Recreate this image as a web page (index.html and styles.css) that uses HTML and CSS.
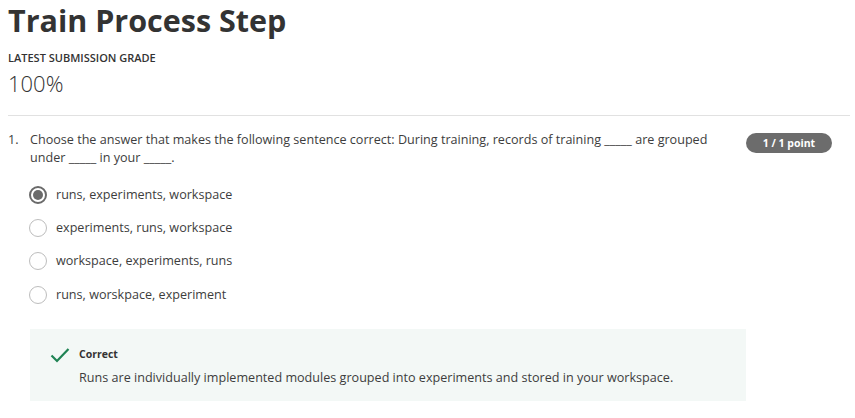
FILE: index.html
```html
<!DOCTYPE html>
<html>
<head>
<meta charset="utf-8">
<link rel="stylesheet" href="styles.css">
</head>
<body>
<div class="page">
  <h1 class="title">Train Process Step</h1>
  <div class="grade-label">LATEST SUBMISSION GRADE</div>
  <div class="grade">100%</div>
  <hr class="rule">
  <div class="question">
    <div class="q-num">1.</div>
    <div class="q-body">
      <div class="q-head">
        <div class="q-text">Choose the answer that makes the following sentence correct: During training, records of training _____ are grouped under _____ in your _____.</div>
        <div class="badge">1 / 1 point</div>
      </div>
    </div>
  </div>
  <div class="options">
    <div class="option"><span class="radio checked"></span><span>runs, experiments, workspace</span></div>
    <div class="option"><span class="radio"></span><span>experiments, runs, workspace</span></div>
    <div class="option"><span class="radio"></span><span>workspace, experiments, runs</span></div>
    <div class="option"><span class="radio"></span><span>runs, worskpace, experiment</span></div>
  </div>
  <div class="feedback">
    <svg class="check" width="20" height="16" viewBox="0 0 20 16"><path d="M1.5 8.5 L7 14 L18.5 2" fill="none" stroke="#1f8354" stroke-width="2.2"/></svg>
    <div class="fb-text">
      <div class="fb-title">Correct</div>
      <div class="fb-body">Runs are individually implemented modules grouped into experiments and stored in your workspace.</div>
    </div>
  </div>
</div>
</body>
</html>
```
FILE: styles.css
```css
html, body {
  margin: 0;
  padding: 0;
  background: #fff;
}
body {
  font-family: "Open Sans", "Noto Sans", sans-serif;
  color: #3d3d3d;
}
.page {
  padding: 0 5px 0 8px;
}
.title {
  margin: 0;
  font-size: 30.5px;
  font-weight: 700;
  line-height: 40px;
  color: #333;
}
.grade-label {
  margin-top: 10px;
  font-size: 11px;
  font-weight: 600;
  line-height: 15px;
  color: #333;
}
.grade {
  margin-top: 5px;
  font-size: 22px;
  font-weight: 300;
  line-height: 26px;
  color: #333;
}
.rule {
  border: 0;
  border-top: 1px solid #e1e1e1;
  margin: 19px 0 0 0;
}
.question {
  display: flex;
  margin-top: 15px;
  font-size: 12.6px;
  line-height: 18px;
}
.q-num {
  width: 22px;
  flex: none;
}
.q-body {
  flex: 1;
}
.q-head {
  display: flex;
  align-items: flex-start;
}
.q-text {
  width: 700px;
  flex: none;
}
.badge {
  margin-left: 16px;
  margin-top: 2px;
  width: 86px;
  height: 20px;
  line-height: 20px;
  text-align: center;
  border-radius: 10px;
  background: #6c6c6c;
  color: #fff;
  font-size: 10.5px;
  font-weight: 700;
}
.options {
  margin-top: 18.5px;
  padding-left: 21px;
  display: flex;
  flex-direction: column;
  gap: 15.4px;
}
.option {
  display: flex;
  align-items: center;
  gap: 9px;
  font-size: 12.6px;
  line-height: 18px;
}
.radio {
  width: 16px;
  height: 16px;
  border: 1px solid #bdbdbd;
  border-radius: 50%;
  box-sizing: content-box;
  position: relative;
  flex: none;
}
.radio.checked {
  border: 2px solid #6a6a6a;
  width: 14px;
  height: 14px;
}
.radio.checked::after {
  content: "";
  position: absolute;
  left: 2px;
  top: 2px;
  width: 10px;
  height: 10px;
  border-radius: 50%;
  background: #6a6a6a;
}
.feedback {
  margin: 25.5px 0 0 22px;
  width: 716px;
  height: 72px;
  box-sizing: border-box;
  background: #f3f8f6;
  display: flex;
  align-items: flex-start;
  padding: 18px 0 0 20px;
  gap: 9px;
}
.check {
  flex: none;
}
.fb-title {
  font-size: 10.5px;
  font-weight: 700;
  line-height: 14px;
  color: #333;
}
.fb-body {
  margin-top: 8px;
  font-size: 12.6px;
  line-height: 18px;
}
```
